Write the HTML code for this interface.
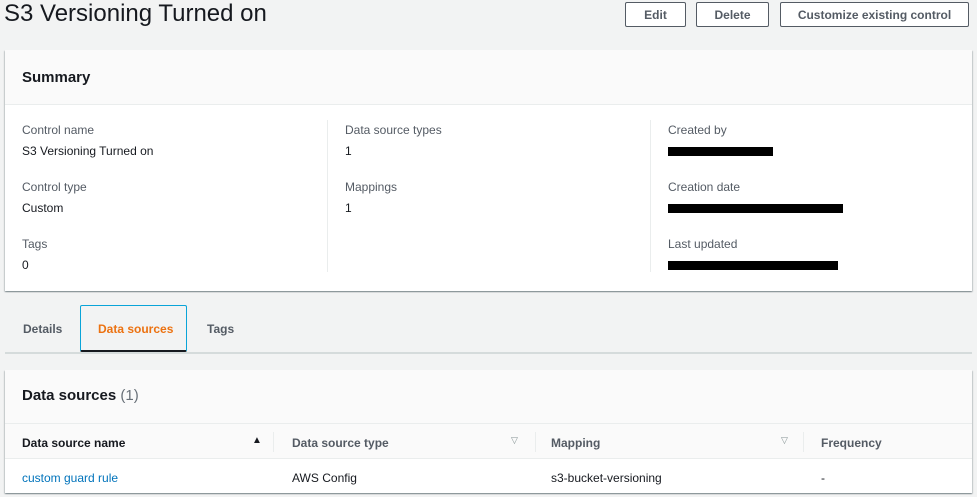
<!DOCTYPE html>
<html><head><style>
body{margin:0;width:977px;height:497px;background:#f2f3f3;font-family:"Liberation Sans",sans-serif;color:#16191f;position:relative;overflow:hidden}
.a{position:absolute}
.btn{position:absolute;top:2px;height:25px;border:1px solid #545b64;background:#fff;font-size:12px;font-weight:bold;color:#545b64;display:flex;align-items:center;justify-content:center;border-radius:2px;box-sizing:border-box}
.card{position:absolute;left:5px;width:967px;background:#fff;box-shadow:0 1px 1px rgba(0,28,36,.3),1px 1px 1px rgba(0,28,36,.15),-1px 1px 1px rgba(0,28,36,.15)}
.hd{background:#fafafa;border-bottom:1px solid #eaeded}
.lb{font-size:12px;color:#545b64}
.v{font-size:12px;color:#16191f}
.red{position:absolute;background:#000;height:9px}
.th{font-size:12px;font-weight:bold;color:#545b64;position:absolute;top:12px}
.td{font-size:12px;position:absolute;top:12px}
</style></head><body>
<div class="a" style="left:4px;top:0px;font-size:24px;">S3 Versioning Turned on</div>
<div class="btn" style="left:625px;width:61px">Edit</div>
<div class="btn" style="left:696px;width:73px">Delete</div>
<div class="btn" style="left:780px;width:189px">Customize existing control</div>

<div class="card" style="top:50px;height:241px">
 <div class="hd" style="height:54px"><div class="a" style="left:17px;top:19px;font-size:15px;font-weight:bold">Summary</div></div>
 <div class="a" style="left:322px;top:70px;width:1px;height:152px;background:#eaeded"></div>
 <div class="a" style="left:645px;top:70px;width:1px;height:152px;background:#eaeded"></div>
 <div class="a lb" style="left:17px;top:73px">Control name</div>
 <div class="a v" style="left:17px;top:94px">S3 Versioning Turned on</div>
 <div class="a lb" style="left:17px;top:130px">Control type</div>
 <div class="a v" style="left:17px;top:151px">Custom</div>
 <div class="a lb" style="left:17px;top:187px">Tags</div>
 <div class="a v" style="left:17px;top:208px">0</div>
 <div class="a lb" style="left:340px;top:73px">Data source types</div>
 <div class="a v" style="left:340px;top:94px">1</div>
 <div class="a lb" style="left:340px;top:130px">Mappings</div>
 <div class="a v" style="left:340px;top:151px">1</div>
 <div class="a lb" style="left:663px;top:73px">Created by</div>
 <div class="red" style="left:663px;top:97px;width:105px"></div>
 <div class="a lb" style="left:663px;top:130px">Creation date</div>
 <div class="red" style="left:663px;top:154px;width:175px"></div>
 <div class="a lb" style="left:663px;top:187px">Last updated</div>
 <div class="red" style="left:663px;top:211px;width:170px"></div>
</div>

<div class="a" style="left:5px;top:352px;width:967px;height:2px;background:#d5dbdb"></div>
<div class="a" style="left:80px;top:305px;width:107px;height:47px;border:1px solid #0aa4d8;border-bottom:2px solid #16191f;box-sizing:border-box;border-radius:2px"></div>
<div class="a" style="left:23px;top:322px;font-size:12px;font-weight:bold;color:#545b64">Details</div>
<div class="a" style="left:98px;top:322px;font-size:12px;font-weight:bold;color:#ec7211">Data sources</div>
<div class="a" style="left:207px;top:322px;font-size:12px;font-weight:bold;color:#545b64">Tags</div>

<div class="card" style="top:370px;height:123px">
 <div class="hd" style="height:88px;border-bottom:1px solid #eaeded">
  <div class="a" style="left:17px;top:17px;font-size:15px;font-weight:bold">Data sources <span style="font-weight:normal;color:#687078">(1)</span></div>
  <div class="a" style="left:0;top:53px;width:967px;height:1px;background:#eaeded"></div>
  <div class="a" style="top:54px;left:0;width:967px;height:34px">
   <div class="th" style="left:17px;color:#16191f">Data source name</div>
   <div class="a" style="left:247px;top:11px;font-size:10px">▲</div>
   <div class="a" style="left:268px;top:8px;width:1px;height:20px;background:#eaeded"></div>
   <div class="th" style="left:287px">Data source type</div>
   <div class="a" style="left:506px;top:11px;font-size:9px;color:#879596">▽</div>
   <div class="a" style="left:530px;top:8px;width:1px;height:20px;background:#eaeded"></div>
   <div class="th" style="left:546px">Mapping</div>
   <div class="a" style="left:776px;top:11px;font-size:9px;color:#879596">▽</div>
   <div class="a" style="left:798px;top:8px;width:1px;height:20px;background:#eaeded"></div>
   <div class="th" style="left:816px">Frequency</div>
  </div>
 </div>
 <div class="a" style="top:89px;left:0;width:967px;height:34px">
  <div class="td" style="left:17px;color:#0073bb">custom guard rule</div>
  <div class="td" style="left:287px">AWS Config</div>
  <div class="td" style="left:546px">s3-bucket-versioning</div>
  <div class="td" style="left:816px">-</div>
 </div>
</div>
</body></html>
